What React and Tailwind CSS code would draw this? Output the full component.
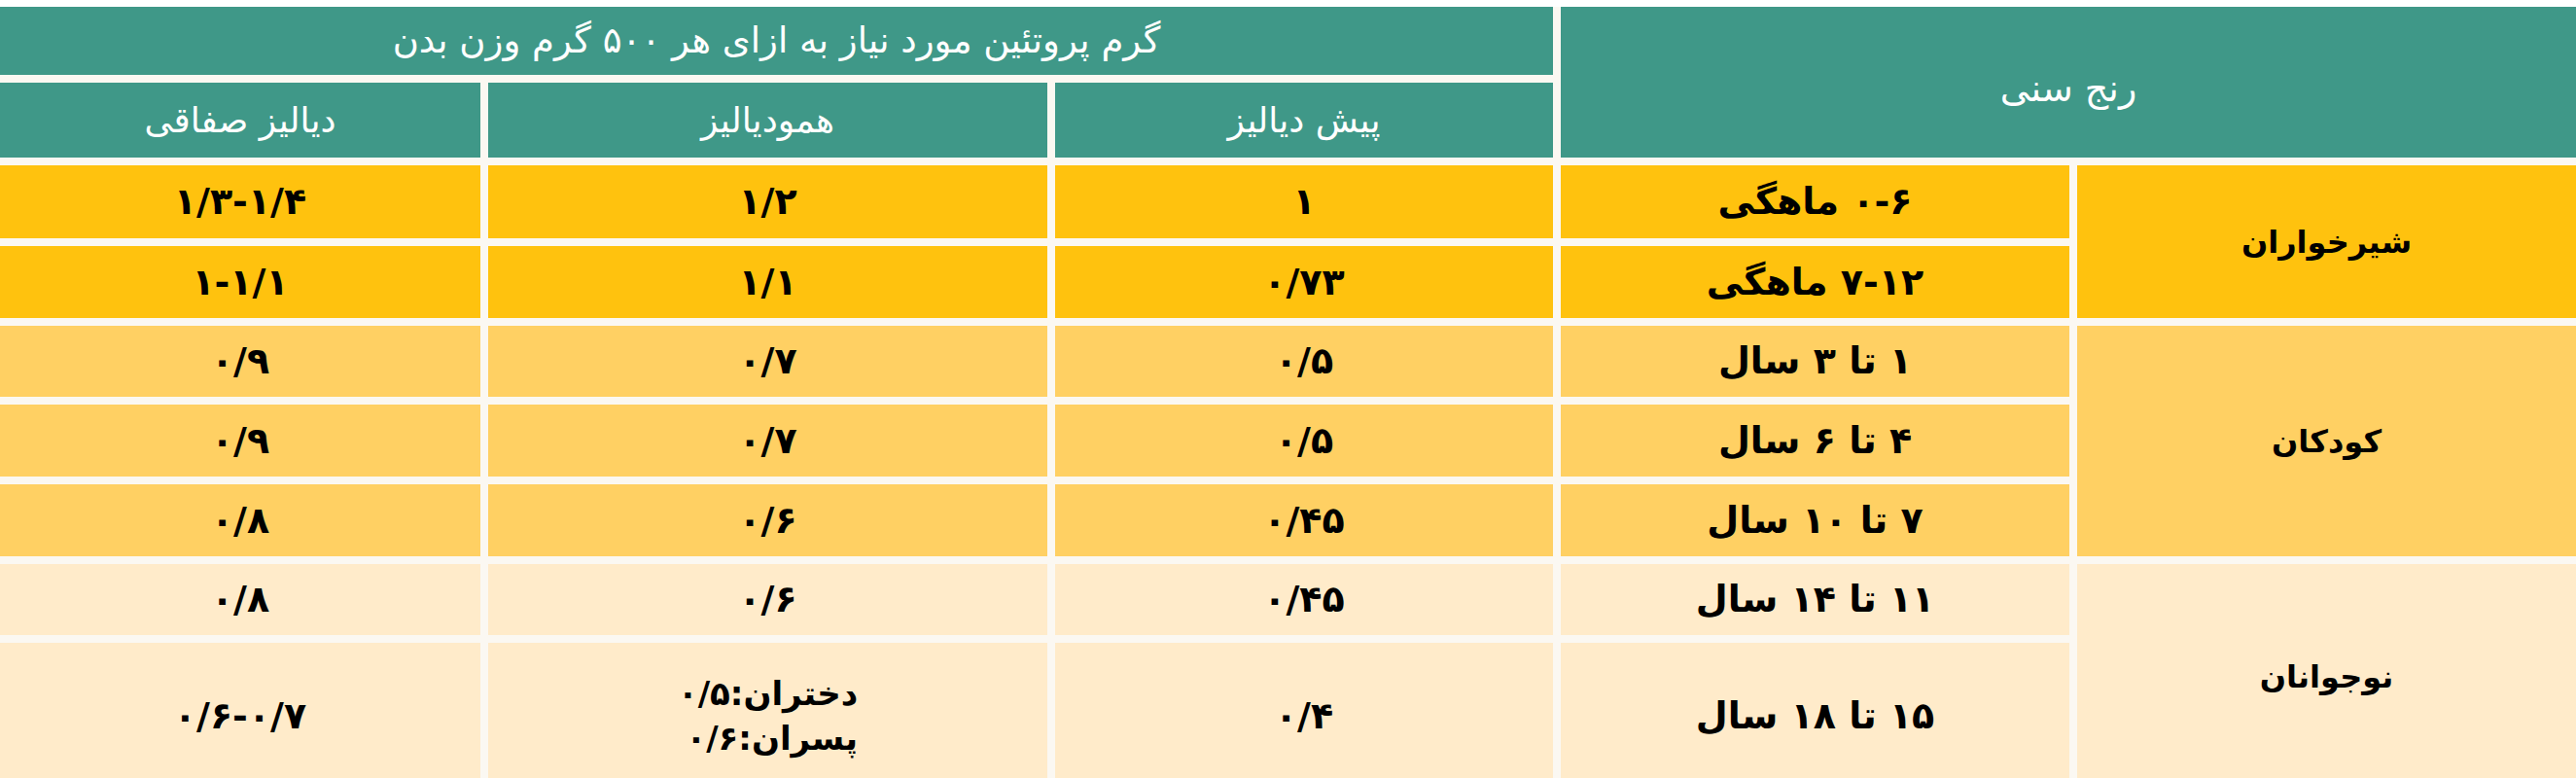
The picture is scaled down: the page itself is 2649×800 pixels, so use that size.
import React from 'react';

const teal = 'bg-[#3f9888] text-white';
const amber = 'bg-[#ffc20e]';
const gold = 'bg-[#ffd063]';
const cream = 'bg-[#ffebca]';

const Cell = ({ className = '', children }) => (
  <div className={`flex items-center justify-center text-center ${className}`}>{children}</div>
);

const rows = [
  { bg: amber, age: '۰-۶ ماهگی', pre: '۱', hemo: '۱/۲', peri: '۱/۳-۱/۴' },
  { bg: amber, age: '۷-۱۲ ماهگی', pre: '۰/۷۳', hemo: '۱/۱', peri: '۱-۱/۱' },
  { bg: gold, age: '۱ تا ۳ سال', pre: '۰/۵', hemo: '۰/۷', peri: '۰/۹' },
  { bg: gold, age: '۴ تا ۶ سال', pre: '۰/۵', hemo: '۰/۷', peri: '۰/۹' },
  { bg: gold, age: '۷ تا ۱۰ سال', pre: '۰/۴۵', hemo: '۰/۶', peri: '۰/۸' },
  { bg: cream, age: '۱۱ تا ۱۴ سال', pre: '۰/۴۵', hemo: '۰/۶', peri: '۰/۸' },
  {
    bg: cream,
    age: '۱۵ تا ۱۸ سال',
    pre: '۰/۴',
    hemo: (
      <div className="flex flex-col items-start text-[34px] leading-[46px]">
        <span>دختران:۰/۵</span>
        <span>پسران:۰/۶</span>
      </div>
    ),
    peri: '۰/۶-۰/۷',
  },
];

const groups = [
  { label: 'شیرخواران', bg: amber, rowClass: 'row-start-3 row-span-2' },
  { label: 'کودکان', bg: gold, rowClass: 'row-start-5 row-span-3' },
  { label: 'نوجوانان', bg: cream, rowClass: 'row-start-8 row-span-2' },
];

const rowStarts = ['row-start-3', 'row-start-4', 'row-start-5', 'row-start-6', 'row-start-7', 'row-start-8', 'row-start-9'];

export default function App() {
  return (
    <div className="w-[2649px] h-[800px] overflow-hidden bg-white pt-[7px]" style={{ fontFamily: '"DejaVu Sans", sans-serif' }}>
      <div
        dir="rtl"
        className="grid gap-2 bg-[#fbf8f2] grid-cols-[513px_523px_512px_575px_1fr] grid-rows-[70px_77px_75px_74px_73px_74px_74px_73px_150px]"
      >
        <Cell className={`${teal} col-start-1 col-span-2 row-start-1 row-span-2 pt-[14px] text-[38px]`}>رنج سنی</Cell>
        <Cell className={`${teal} col-start-3 col-span-3 row-start-1 text-[37px]`}>
          گرم پروتئین مورد نیاز به ازای هر ۵۰۰ گرم وزن بدن
        </Cell>
        <Cell className={`${teal} col-start-3 row-start-2 text-[36px]`}>پیش دیالیز</Cell>
        <Cell className={`${teal} col-start-4 row-start-2 text-[36px]`}>همودیالیز</Cell>
        <Cell className={`${teal} col-start-5 row-start-2 text-[36px]`}>دیالیز صفاقی</Cell>

        {groups.map((g) => (
          <Cell key={g.label} className={`${g.bg} col-start-1 ${g.rowClass} text-[32px] font-bold text-black`}>
            {g.label}
          </Cell>
        ))}

        {rows.map((r, i) => (
          <React.Fragment key={i}>
            <Cell className={`${r.bg} col-start-2 ${rowStarts[i]} text-[38px] font-bold text-black`}>{r.age}</Cell>
            <Cell className={`${r.bg} col-start-3 ${rowStarts[i]} text-[38px] font-bold text-black`}>{r.pre}</Cell>
            <Cell className={`${r.bg} col-start-4 ${rowStarts[i]} text-[38px] font-bold text-black`}>{r.hemo}</Cell>
            <Cell className={`${r.bg} col-start-5 ${rowStarts[i]} text-[38px] font-bold text-black`}>{r.peri}</Cell>
          </React.Fragment>
        ))}
      </div>
    </div>
  );
}
